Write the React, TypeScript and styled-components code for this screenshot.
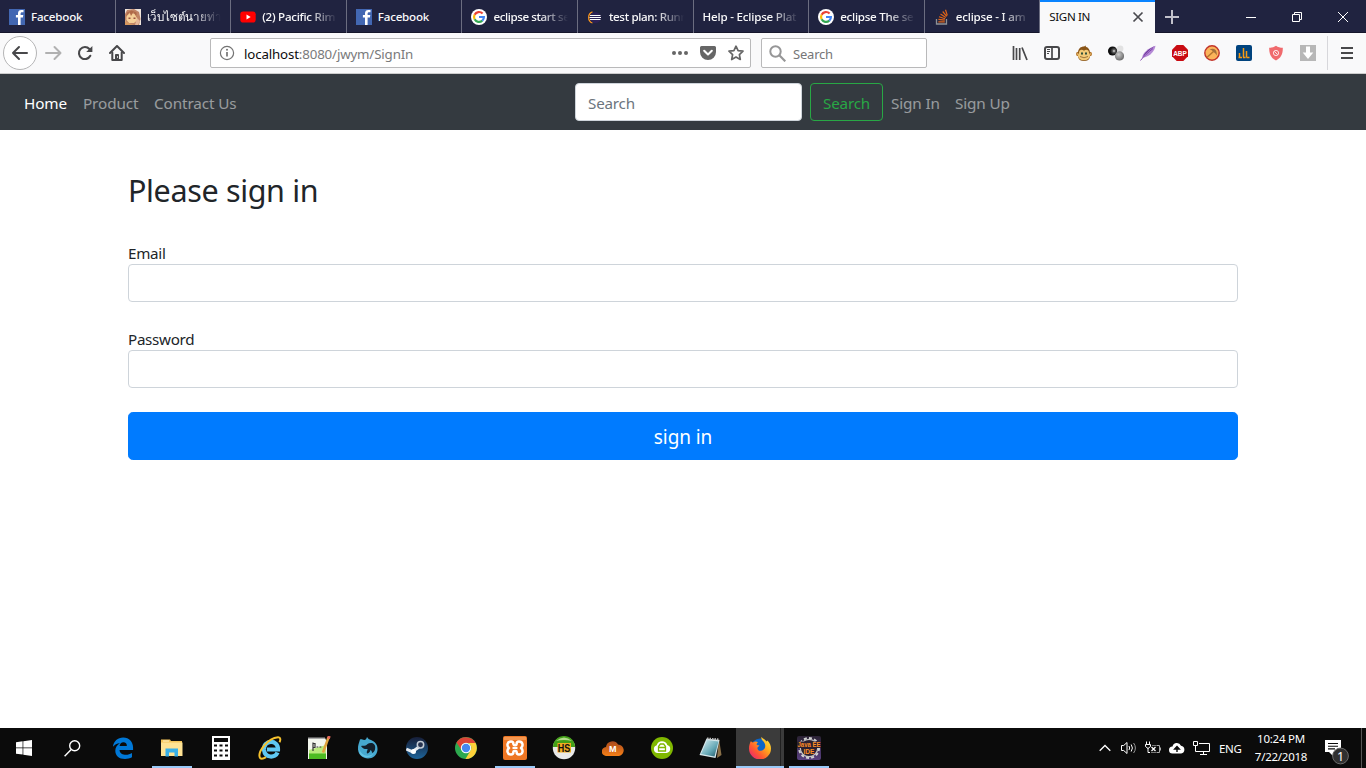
import React from "react";
import styled, { createGlobalStyle, css } from "styled-components";

const GlobalStyle = createGlobalStyle`
  *, *::before, *::after { box-sizing: border-box; }
  html, body { margin: 0; padding: 0; background: #fff; overflow: hidden; }
  body { font-family: "Segoe UI", "Noto Sans", "Open Sans", sans-serif; color: #212529; }
  button, input { font-family: inherit; }
  svg { display: block; flex: none; }
`;

const Screen = styled.div`
  width: 1366px;
  height: 768px;
  display: flex;
  flex-direction: column;
  background: #fff;
  overflow: hidden;
`;

/* ---------- Browser chrome ---------- */

const TabStrip = styled.div`
  height: 33px;
  flex: none;
  display: flex;
  background: #202340;
  box-shadow: inset 0 -1px 0 #15162b;
`;

const Tab = styled.div<{ $active?: boolean }>`
  width: 115.6px;
  height: 33px;
  flex: none;
  display: flex;
  align-items: center;
  gap: 6px;
  padding: 0 9px;
  font-size: 11.6px;
  line-height: 16px;
  font-weight: 500;
  color: #f9f9fa;
  border-right: 1px solid #6b6d80;
  ${(p) =>
    p.$active &&
    css`
      width: 114.6px;
      color: #0c0c0d;
      font-weight: 400;
      background: #f9f9fa;
      border-right: 0;
      border-top: 2px solid #0a84ff;
      padding-bottom: 2px;
      justify-content: space-between;
    `}
`;

const TabTitle = styled.span<{ $fade?: boolean; $ls: number }>`
  flex: 1;
  min-width: 0;
  overflow: hidden;
  white-space: nowrap;
  letter-spacing: ${(p) => p.$ls}px;
  ${(p) =>
    p.$fade &&
    css`
      mask-image: linear-gradient(to left, transparent 0, #000 28px);
    `}
`;

const NewTab = styled.div`
  width: 34px;
  height: 33px;
  display: flex;
  align-items: center;
  justify-content: center;
`;

const WindowControls = styled.div`
  margin-left: auto;
  display: flex;
  align-items: center;
`;

const WindowButton = styled.div`
  width: 46px;
  height: 33px;
  display: flex;
  align-items: center;
  justify-content: center;
`;

const Toolbar = styled.div`
  height: 41px;
  flex: none;
  display: flex;
  align-items: center;
  background: #f9f9fa;
  border-bottom: 1px solid #ccc;
`;

const NavButtons = styled.div`
  width: 210px;
  display: flex;
  align-items: center;
  padding-left: 3px;
`;

const BackButton = styled.div`
  width: 34px;
  height: 34px;
  border: 1px solid #b5b5b6;
  border-radius: 50%;
  background: #fff;
  display: flex;
  align-items: center;
  justify-content: center;
`;

const ToolButton = styled.div`
  width: 32px;
  height: 32px;
  flex: none;
  display: flex;
  align-items: center;
  justify-content: center;
`;

const Field = styled.div<{ $w: number }>`
  width: ${(p) => p.$w}px;
  height: 30px;
  flex: none;
  display: flex;
  align-items: center;
  background: #fff;
  border: 1px solid #b9b9ba;
  border-radius: 2px;
`;

const UrlField = styled(Field)`
  padding: 0 0 0 8px;
  margin-right: 10px;
`;

const UrlText = styled.span`
  margin-left: 9px;
  flex: 1;
  padding-top: 1px;
  font-size: 13.3px;
  line-height: 20px;
  letter-spacing: -0.15px;
  color: #7a7a7b;
  white-space: nowrap;

  b { font-weight: 400; color: #0c0c0d; }
`;

const UrlActions = styled.div`
  display: flex;
  align-items: center;
  gap: 12px;
  padding-right: 6px;
`;

const SearchField = styled(Field)`
  padding: 0 7px;
  gap: 7px;
  font-size: 13px;
  letter-spacing: -0.2px;
  color: #767677;
`;

const SearchHint = styled.span`
  padding-top: 1px;
`;

const Extensions = styled.div`
  margin-left: auto;
  display: flex;
  align-items: center;
`;

const ToolDivider = styled.div`
  width: 1px;
  height: 34px;
  margin: 0 3px;
  background: #d7d7db;
`;

const MenuButton = styled(ToolButton)`
  width: 35px;
  padding-right: 3px;
`;

/* ---------- Page ---------- */

const Navbar = styled.nav`
  height: 56px;
  flex: none;
  display: flex;
  align-items: center;
  padding: 0 16px;
  background: #343a40;
`;

const NavLink = styled.a<{ $active?: boolean; $w: number }>`
  width: ${(p) => p.$w}px;
  padding: 9px 8px 7px;
  font-size: 15.3px;
  line-height: 24px;
  letter-spacing: -0.13px;
  white-space: nowrap;
  color: ${(p) => (p.$active ? "#fff" : "rgba(255, 255, 255, 0.5)")};
`;

const NavGroup = styled.div`
  display: flex;
  width: 559px;
`;

const TextInput = styled.input`
  width: 100%;
  height: 38px;
  padding: 8px 12px 6px;
  font-size: 15.2px;
  line-height: 24px;
  letter-spacing: -0.2px;
  color: #495057;
  background: #fff;
  border: 1px solid #ced4da;
  border-radius: 4px;

  &::placeholder { color: #6c757d; opacity: 1; }
`;

const NavSearch = styled(TextInput)`
  width: 227px;
  margin-right: 8px;
`;

const OutlineButton = styled.button`
  width: 73px;
  height: 38px;
  padding: 7px 0 5px;
  font-size: 15.2px;
  line-height: 24px;
  letter-spacing: -0.2px;
  color: #28a745;
  background: transparent;
  border: 1px solid #28a745;
  border-radius: 4px;
`;

const Main = styled.main`
  flex: 1;
  width: 1110px;
  margin-left: 128px;
  padding-top: 41px;
`;

const Title = styled.h2`
  margin: 0 0 31px;
  font-size: 30.5px;
  line-height: 38px;
  font-weight: 400;
  letter-spacing: -0.35px;
`;

const FormGroup = styled.div`
  display: flex;
  flex-direction: column;
  margin-bottom: 24px;
`;

const Label = styled.label`
  padding-top: 1px;
  font-size: 15.2px;
  line-height: 24px;
  height: 24px;
  letter-spacing: -0.3px;
`;

const SubmitButton = styled.button`
  display: block;
  width: 100%;
  height: 48px;
  padding: 9px 16px 7px;
  font-size: 19px;
  line-height: 30px;
  letter-spacing: -0.1px;
  color: #fff;
  background: #007bff;
  border: 1px solid #007bff;
  border-radius: 4.8px;
`;

/* ---------- Taskbar ---------- */

const Taskbar = styled.footer`
  height: 40px;
  flex: none;
  display: flex;
  background: #0b0b0b;
  color: #fff;
`;

const TaskItem = styled.div<{ $w?: number; $open?: boolean; $focus?: boolean }>`
  width: ${(p) => p.$w ?? 49}px;
  height: 40px;
  flex: none;
  display: flex;
  align-items: center;
  justify-content: center;
  ${(p) =>
    p.$open &&
    css`
      background: linear-gradient(#99c9f8, #99c9f8) center bottom / 40px 2px no-repeat;
    `}
  ${(p) =>
    p.$focus &&
    css`
      background: linear-gradient(#99c9f8, #99c9f8) right bottom / 48px 2px no-repeat,
        linear-gradient(#202020, #202020) 45px 0 / 1px 40px no-repeat,
        linear-gradient(#3b3b3b, #3b3b3b) right top / 48px 40px no-repeat;
    `}
`;

const PinnedApps = styled.div`
  display: flex;
  margin-left: 2px;
`;

const Tray = styled.div`
  margin-left: auto;
  display: flex;
  align-items: center;
`;

const TrayIcon = styled.div`
  width: 24px;
  display: flex;
  justify-content: center;
`;

const Language = styled.span`
  width: 35px;
  padding-left: 6px;
  font-size: 11.5px;
  letter-spacing: -0.35px;
`;

const Clock = styled.div`
  width: 68px;
  margin-left: -1px;
  text-align: center;
  font-size: 11.5px;
  line-height: 18px;
  letter-spacing: -0.25px;
  white-space: nowrap;
`;

const Notifications = styled.div`
  width: 46px;
  height: 40px;
  padding: 11px 0 0 10px;
`;

const ShowDesktop = styled.div`
  width: 5px;
  height: 40px;
  border-left: 1px solid #555;
`;

/* ---------- Icons ---------- */

const FacebookIcon = () => (
  <svg width="16" height="16" viewBox="0 0 16 16">
    <rect width="16" height="16" fill="#4267b2" />
    <path d="M14.5 3.2h-1.4c-1.2 0-1.5.6-1.5 1.5V6h2.7l-.4 2.5h-2.3V16H9V8.500H6.900V6H9V4.300C9 2 10.300.9 12.400.9l2.100.1z" fill="#fff" />
  </svg>
);

const AnimeIcon = () => (
  <svg width="16" height="16" viewBox="0 0 16 16">
    <rect width="16" height="16" fill="#f1e6dc" />
    <path d="M0 5L2 1l7-1 5 3 1.500 7-1.500 6H2L0 11z" fill="#c08466" />
    <path d="M1.500 7l4-3.500L12 6v5.500L9 14H4l-2.500-3z" fill="#f5cf98" />
    <path d="M1 8l3.500-5 1.500 4 2.500-4 3.500 6-.5-5.500-5-2-4.500 2z" fill="#b06a48" />
    <path d="M3.500 8.500h2V10h-2zM8.500 8.500h2V10h-2z" fill="#9a5040" />
    <path d="M0 12l4 2 5 2H0z" fill="#d5975f" />
    <path d="M12 9l3 3-2 4h-3z" fill="#e6b89a" />
  </svg>
);

const YoutubeIcon = () => (
  <svg width="16" height="16" viewBox="0 0 16 16">
    <rect x=".3" y="2.500" width="15.400" height="11" rx="2.800" fill="#f00" />
    <path d="M6.500 5.600v4.800l4.200-2.400z" fill="#fff" />
  </svg>
);

const GoogleIcon = () => (
  <svg width="16" height="16" viewBox="0 0 16 16">
    <circle cx="8" cy="8" r="8" fill="#fff" />
    <g fill="none" strokeWidth="2.200">
      <path d="M3.600 5.700A5 5 0 0 1 11.600 4.500" stroke="#ea4335" />
      <path d="M3.600 10.300a5 5 0 0 1 0-4.600" stroke="#fbbc05" />
      <path d="M11.300 11.700a5 5 0 0 1-7.700-1.400" stroke="#34a853" />
      <path d="M8 8h4.900a5 5 0 0 1-1.600 3.700" stroke="#4285f4" />
    </g>
  </svg>
);

const EclipseIcon = () => (
  <svg width="16" height="16" viewBox="0 0 16 16">
    <path d="M5.500 2.800A6 6 0 0 0 5.500 14" fill="none" stroke="#f7941e" strokeWidth="1.300" />
    <circle cx="8.300" cy="8.500" r="5.500" fill="#2c2255" />
    <path d="M3 6.500h10.500M2.500 8.500h11.500M3 10.500h10.500" stroke="#fff" strokeWidth="1" />
  </svg>
);

const StackIcon = () => (
  <svg width="16" height="16" viewBox="0 0 16 16" fill="none">
    <path d="M2.500 10v5h10v-5" stroke="#8f9296" strokeWidth="1.300" />
    <path d="M4.300 12.800h6.500M4.400 10.400l6.400.8M5 7.800l6.100 1.900M6.500 5l5.300 3.400M8.700 2.500l4 4.900M11.500.8l1.800 5.700" stroke="#df6518" strokeWidth="1.200" />
  </svg>
);

const CloseTabIcon = () => (
  <svg width="16" height="16" viewBox="0 0 16 16">
    <path d="M3.500 3.500l9 9M12.500 3.500l-9 9" stroke="#4a4a4f" strokeWidth="1.700" />
  </svg>
);

const PlusIcon = () => (
  <svg width="16" height="16" viewBox="0 0 16 16">
    <path d="M8 1v14M1 8h14" stroke="#c1c1cb" strokeWidth="2" />
  </svg>
);

const MinimizeIcon = () => (
  <svg width="10" height="10" viewBox="0 0 10 10" shapeRendering="crispEdges">
    <path d="M0 5.500h10" stroke="#fff" />
  </svg>
);

const RestoreIcon = () => (
  <svg width="10" height="10" viewBox="0 0 10 10" fill="none" stroke="#fff">
    <path d="M.5 2.500h7v7h-7zM2.500 2.500v-2h7v7h-2" />
  </svg>
);

const CloseWindowIcon = () => (
  <svg width="10" height="10" viewBox="0 0 10 10">
    <path d="M0 0l10 10M10 0L0 10" stroke="#fff" />
  </svg>
);

const ArrowIcon = ({ right, color }: { right?: boolean; color: string }) => (
  <svg width="18" height="18" viewBox="0 0 18 18" fill="none" stroke={color} strokeWidth="2" strokeLinecap="round" strokeLinejoin="round">
    {right ? <path d="M2 9h14M10.500 3l6 6-6 6" /> : <path d="M16 9H2M8 3L2 9l6 6" />}
  </svg>
);

const ReloadIcon = () => (
  <svg width="16" height="16" viewBox="0 0 16 16">
    <path d="M13.300 10.800A6 6 0 1 1 12.400 4" fill="none" stroke="#48484a" strokeWidth="2.100" strokeLinecap="round" />
    <path d="M15.400 1v6H9.200z" fill="#48484a" />
  </svg>
);

const HomeIcon = () => (
  <svg width="16" height="16" viewBox="0 0 16 16" fill="none" stroke="#48484a" strokeWidth="2" strokeLinejoin="round" strokeLinecap="round">
    <path d="M1 8l7-7 7 7" />
    <path d="M3.300 7.500V15h9.400V7.500" />
    <path d="M6.500 14.500V9.500h3v5z" fill="#48484a" strokeWidth="1" />
    <path d="M8.500 11.500v1" stroke="#fff" strokeWidth=".8" />
  </svg>
);

const InfoIcon = () => (
  <svg width="16" height="16" viewBox="0 0 16 16">
    <circle cx="8" cy="8" r="6.600" fill="none" stroke="#737373" strokeWidth="1.200" />
    <path d="M8 7v4.500" stroke="#737373" strokeWidth="1.700" />
    <circle cx="8" cy="4.800" r="1" fill="#737373" />
  </svg>
);

const DotsIcon = () => (
  <svg width="16" height="16" viewBox="0 0 16 16" fill="#666">
    <circle cx="2" cy="8" r="2" />
    <circle cx="8" cy="8" r="2" />
    <circle cx="14" cy="8" r="2" />
  </svg>
);

const PocketIcon = () => (
  <svg width="16" height="16" viewBox="0 0 16 16">
    <path d="M1.500 1h13A1.500 1.500 0 0 1 16 2.500V7A8 8 0 0 1 0 7V2.500A1.500 1.500 0 0 1 1.500 1z" fill="#666" />
    <path d="M4.200 5.800L8 9.400l3.800-3.600" fill="none" stroke="#fff" strokeWidth="2.100" strokeLinecap="round" strokeLinejoin="round" />
  </svg>
);

const StarIcon = () => (
  <svg width="16" height="16" viewBox="0 0 16 16">
    <path d="M8 1.200l2.100 4.400 4.900.6-3.600 3.400.9 4.900L8 12.100l-4.300 2.400.9-4.900L1 6.200l4.900-.6z" fill="none" stroke="#666" strokeWidth="1.700" strokeLinejoin="round" />
  </svg>
);

const MagnifierIcon = () => (
  <svg width="17" height="17" viewBox="0 0 17 17" fill="none" stroke="#969697" strokeWidth="2">
    <circle cx="6.500" cy="6.500" r="5.200" />
    <path d="M10.300 10.300l6 6" strokeWidth="2.200" />
  </svg>
);

const LibraryIcon = () => (
  <svg width="16" height="16" viewBox="0 0 16 16" fill="none" stroke="#48484a" strokeWidth="1.700">
    <path d="M1.500 1v14M4.500 3v12M7.700 3v12M10 2.500L15 15" />
  </svg>
);

const SidebarIcon = () => (
  <svg width="16" height="16" viewBox="0 0 16 16" fill="none" stroke="#48484a">
    <rect x="1" y="2" width="14" height="12" rx="2" strokeWidth="2" />
    <path d="M8 2v12" strokeWidth="1.700" />
    <path d="M3 4.500h3M3 6.500h3M3 8.500h2" />
  </svg>
);

const MonkeyIcon = () => (
  <svg width="16" height="16" viewBox="0 0 16 16">
    <circle cx="2.200" cy="9" r="2.200" fill="#b5762a" />
    <circle cx="13.800" cy="9" r="2.200" fill="#b5762a" />
    <circle cx="2.300" cy="9" r="1.100" fill="#f2c979" />
    <circle cx="13.700" cy="9" r="1.100" fill="#f2c979" />
    <path d="M2 8C2 3.500 5 1.500 8 1.500L10 .5l-.3 1.300C12.500 2.500 14 5 14 8v4c-1 3-3 4-6 4s-5-1-6-4z" fill="#8a5518" />
    <path d="M3 8c0-3.500 3-4 5-2.300C10 4 13 4.500 13 8c2 1.500 1.500 7-5 7.200C1.500 15 1 9.500 3 8z" fill="#f3ca78" />
    <ellipse cx="6" cy="8.500" rx="1" ry="1.300" fill="#274a38" />
    <ellipse cx="10" cy="8.500" rx="1" ry="1.300" fill="#274a38" />
    <path d="M4 11.500q4 2.500 8 0" fill="none" stroke="#8a5f2b" strokeWidth=".8" />
  </svg>
);

const SpheresIcon = () => (
  <svg width="16" height="16" viewBox="0 0 16 16">
    <defs>
      <radialGradient id="blackBall" cx=".65" cy=".5" r=".6"><stop stopColor="#eee" /><stop offset=".3" stopColor="#555" /><stop offset=".65" stopColor="#151515" /><stop offset="1" stopColor="#050505" /></radialGradient>
      <radialGradient id="greyBall" cx=".4" cy=".35" r=".7"><stop stopColor="#ccc" /><stop offset="1" stopColor="#666" /></radialGradient>
    </defs>
    <circle cx="12.200" cy="3.700" r="3.200" fill="#e2e2e2" />
    <circle cx="4.600" cy="6" r="4.600" fill="url(#blackBall)" />
    <circle cx="11.500" cy="10.900" r="4.600" fill="url(#greyBall)" />
  </svg>
);

const FeatherIcon = () => (
  <svg width="16" height="16" viewBox="0 0 16 16">
    <path d="M2 13C2.500 8 8 3 15.500.7 15 5 11 9.500 8 11c-2 1-4 1.500-6 2z" fill="#b58ad6" />
    <path d="M3 12C6 8 10 4 15 1 11 3 5 6 3 12z" fill="#6b3597" />
    <path d="M.5 15.500C4 11 8 7.500 13 3.500" fill="none" stroke="#7a3da8" strokeWidth=".9" />
  </svg>
);

const AdblockIcon = () => (
  <svg width="16" height="16" viewBox="0 0 16 16">
    <path d="M4.700 0h6.600L16 4.700v6.600L11.300 16H4.700L0 11.300V4.700z" fill="#c90b12" />
    <text x="8" y="10.800" textAnchor="middle" textLength="13.600" lengthAdjust="spacingAndGlyphs" fontFamily="Liberation Sans, sans-serif" fontWeight="700" fontSize="8" fill="#fff">ABP</text>
  </svg>
);

const PickaxeIcon = () => (
  <svg width="16" height="16" viewBox="0 0 16 16">
    <circle cx="8" cy="8" r="7.200" fill="#fbb45a" stroke="#c2342a" strokeWidth="1.400" />
    <path d="M2.800 12.500L9.500 6.500" stroke="#b5752f" strokeWidth="1.500" />
    <path d="M5.500 4.200q4-1 5.500.300 2 1.500 1.800 6-1.500-3-3.300-3.600Q8 5 5.500 4.200z" fill="#a3703c" />
  </svg>
);

const ChartIcon = () => (
  <svg width="16" height="16" viewBox="0 0 16 16">
    <rect width="16" height="16" rx="2" fill="#00437e" />
    <path d="M2.500 12.500h3.500M7 12.500h2.500M10.500 12.500h3M3.500 12.500V8M7.500 12.500V3M10.500 12.500V6" fill="none" stroke="#f79a12" strokeWidth="1.500" />
  </svg>
);

const ShieldIcon = () => (
  <svg width="16" height="16" viewBox="0 0 16 16">
    <path d="M8 .8c2 1.400 4.200 2 6.800 2C15 9.500 12.500 13.300 8 15.500 3.500 13.300 1 9.500 1.200 2.800 3.800 2.800 6 2.200 8 .8z" fill="#f06a6d" />
    <circle cx="8" cy="8" r="2.600" fill="none" stroke="#fde3e3" />
    <path d="M6.200 6.200l3.600 3.600" stroke="#fde3e3" />
  </svg>
);

const DownloadIcon = () => (
  <svg width="16" height="16" viewBox="0 0 16 16">
    <rect width="16" height="16" fill="#b7b7b7" />
    <path d="M6 1.500h4v6h3.300L8 14 2.700 7.500H6z" fill="#fff" />
  </svg>
);

const MenuIcon = () => (
  <svg width="14" height="14" viewBox="0 0 14 14">
    <path d="M1 2h12M1 7h12M1 12h12" stroke="#48484a" strokeWidth="2" />
  </svg>
);

const WindowsIcon = () => (
  <svg width="16" height="16" viewBox="0 0 16 16" fill="#fff">
    <path d="M0 2.200L6.600 1.300v6.200H0zM7.300 1.200L16 0v7.500H7.300zM0 8.300h6.600v6.300L0 13.700zM7.300 8.300H16V16l-8.700-1.200z" />
  </svg>
);

const TaskSearchIcon = () => (
  <svg width="17" height="17" viewBox="0 0 17 17" fill="none" stroke="#fff" strokeWidth="1.400">
    <circle cx="10.700" cy="5.700" r="5" />
    <path d="M7.200 9.400L.6 16.200" />
  </svg>
);

const EdgeIcon = () => (
  <svg width="22" height="22" viewBox="0 0 24 24">
    <path d="M1 10.700C1.700 4.500 6.300.5 12.200.5 19 .5 23 5.600 23 11.500v2.600H8.200c.3 3.700 3.500 5.300 7 5.300 2.400 0 4.500-.6 6.600-1.900v4.700c-2.300 1.200-4.800 1.800-7.600 1.800C7.500 24 3.600 20.300 3.600 15c0-3.600 1.800-6.500 5-8.300C5.400 6.900 2.700 8.300 1 10.700zM8.300 9.800h7.900c0-2.600-1.200-4-3.700-4-2.400 0-3.900 1.500-4.200 4z" fill="#0078d7" />
  </svg>
);

const FolderIcon = () => (
  <svg width="22" height="20" viewBox="0 0 22 20">
    <path d="M0 1.500h9l1 1.500h11v15H0z" fill="#f6c65b" />
    <path d="M2 3h6" stroke="#fff3c9" />
    <path d="M0 4.500h21.500V18H0z" fill="#ffe394" />
    <path d="M4.500 18.500v-8h12.500v8h-3.500v-4H8v4z" fill="#39b0e8" />
  </svg>
);

const CalculatorIcon = () => (
  <svg width="18" height="24" viewBox="0 0 18 24">
    <rect width="18" height="24" fill="#fff" />
    <path d="M2 2h14v4H2z" fill="#0b0b0b" />
    <path d="M2 9.500h3M7.500 9.500h3M13 9.500h3M2 14.500h3M7.500 14.500h3M13 14.500h3M2 19.500h3M7.500 19.500h3M13 19.500h3" stroke="#0b0b0b" strokeWidth="2" />
  </svg>
);

const ExplorerIcon = () => (
  <svg width="24" height="24" viewBox="0 0 24 24" fill="none">
    <path d="M19.500 16.500C17.500 22 7 22.500 6 14 5 3.500 20.500 3 20 13.500H9" stroke="#5fc8f3" strokeWidth="4.200" />
    <path d="M2 22C-1 16 10 2 20 1.300c3-.2 2.500 3 1.500 5M2 22c1.500 1.500 4 .5 6-.8" stroke="#f6c22d" strokeWidth="2" />
  </svg>
);

const NotepadPlusIcon = () => (
  <svg width="24" height="24" viewBox="0 0 24 24">
    <path d="M1 2h17l2 4v17H1z" fill="#f3f6ee" />
    <path d="M2 14l17-5v14H2z" fill="#b9ea7c" />
    <path d="M2 17.500h17V23H2z" fill="#4dbb22" />
    <path d="M1 1.500h17v1.500H1z" fill="#a9a9a9" />
    <path d="M6 6.500V15M6 7.500h2v4H6M9.500 11h1.800M12.500 11h1.800" stroke="#333" fill="none" strokeWidth="1.200" />
    <path d="M21.500 1.500l-5.500 15" stroke="#e0a33d" strokeWidth="2.500" />
    <path d="M22.300 0l-1 2.600" stroke="#e46a5e" strokeWidth="3" />
  </svg>
);

const WaterfoxIcon = () => (
  <svg width="22" height="22" viewBox="0 0 22 22">
    <path d="M3 2.500C5 2 5 3 7.500 3c1 0 2-1 2.500-3 1 1.500 2 2.500 4 3 4 1.500 7 5 6.500 10C20 18 16 21.500 11 21.500S1.500 18 1 12.500C.8 8 2 6 3 2.500z" fill="#46a9d0" />
    <path d="M4 9c1.500-.5 3 0 4.500-.5C10 8 11 5.500 15 6c2 .5 4 2.500 3 6.500-.500 2-1.500 3-3 3.500 0-1.500-.5-2.500-1.500-3-.5 2-2 3.500-3.500 3.500-1-2 1-3.500.5-4.500-2 0-4.500.5-6.500-3z" fill="#12202c" />
    <path d="M2.500 12c1 6 8 9 14 4.500-3 5-11 5.500-14-.5z" fill="#64c4e4" />
  </svg>
);

const SteamIcon = () => (
  <svg width="22" height="22" viewBox="0 0 22 22">
    <defs><linearGradient id="steamFill" x2="0" y2="1"><stop stopColor="#171e38" /><stop offset="1" stopColor="#1d6398" /></linearGradient></defs>
    <circle cx="11" cy="11" r="11" fill="url(#steamFill)" />
    <path d="M.3 12l6 2.700L13 10" fill="none" stroke="#e5ebf0" strokeWidth="3" />
    <circle cx="14.500" cy="7.800" r="3.200" fill="#26334f" stroke="#c3ccd6" strokeWidth="1.500" />
    <circle cx="7.500" cy="14.500" r="2.500" fill="#fff" />
  </svg>
);

const ChromeIcon = () => (
  <svg width="22" height="22" viewBox="0 0 22 22">
    <circle cx="11" cy="11" r="11" fill="#2da94f" />
    <path d="M1.500 5.500A11 11 0 0 1 20.600 6H11a5 5 0 0 0-4.700 6.700z" fill="#dc4437" />
    <path d="M20.600 6A11 11 0 0 1 10.500 22l5-8.500A5 5 0 0 0 13 6z" fill="#fdd039" />
    <circle cx="11" cy="11" r="5.200" fill="#fff" />
    <circle cx="11" cy="11" r="4.200" fill="#4688f1" />
  </svg>
);

const XamppIcon = () => (
  <svg width="24" height="24" viewBox="0 0 24 24">
    <rect width="24" height="24" rx="2" fill="#ee7623" />
    <path d="M1 1h22v3H1z" fill="#f59750" />
    <path d="M8 5.500C4 5.500 3.500 10 6 12c-2.500 2-2 6.500 2 6.500 1.800 0 2.400-1.200 2.400-2.500 0-1.500 3.200-1.500 3.200 0 0 1.300.6 2.500 2.400 2.500 4 0 4.500-4.500 2-6.500 2.500-2 2-6.500-2-6.500-1.800 0-2.400 1.200-2.400 2.500 0 1.500-3.200 1.500-3.200 0C10.400 6.700 9.800 5.500 8 5.500z" fill="none" stroke="#fff" strokeWidth="2.500" strokeLinejoin="round" />
    <path d="M9.500 12h5" stroke="#fff" strokeWidth="2.200" />
  </svg>
);

const HeidiIcon = () => (
  <svg width="24" height="24" viewBox="0 0 24 24">
    <circle cx="12" cy="12" r="11.200" fill="#e9e9e9" />
    <path d="M1 11a11 11 0 0 1 22 0z" fill="#43a018" />
    <path d="M4 5q8-7 16 0-8-2-16 0z" fill="#b2dc8b" />
    <path d="M5.500 7h13.500v9.500H5.500z" fill="#f1ac20" />
    <text x="12" y="15.500" textAnchor="middle" textLength="12.500" lengthAdjust="spacingAndGlyphs" fontFamily="Liberation Sans, sans-serif" fontWeight="700" fontSize="10" fill="#111">HS</text>
  </svg>
);

const CloudMIcon = () => (
  <svg width="22" height="16" viewBox="0 0 22 16">
    <defs><linearGradient id="mCloud" x2="0" y2="1"><stop stopColor="#a94a1d" /><stop offset="1" stopColor="#f57f17" /></linearGradient></defs>
    <path d="M4.500 16A4.500 4.500 0 0 1 4 7a6.500 6.500 0 0 1 12-2.500A5.800 5.800 0 0 1 17 16z" fill="url(#mCloud)" />
    <text x="10.700" y="12.300" textAnchor="middle" fontFamily="Liberation Sans, sans-serif" fontWeight="700" fontSize="9" fill="#fff">M</text>
  </svg>
);

const GreenCloudIcon = () => (
  <svg width="22" height="22" viewBox="0 0 22 22">
    <circle cx="11" cy="11" r="11" fill="#80b800" />
    <path d="M6.500 16a4 4 0 0 1-.8-7.800A5.600 5.600 0 0 1 16.300 8a4.100 4.100 0 0 1-.8 8z" fill="#fff" />
    <path d="M7.500 14V9.500L9.300 7h3.400l1.800 2.500V14zM8 10.500h6" fill="none" stroke="#80b800" strokeWidth="1.300" />
  </svg>
);

const NotepadIcon = () => (
  <svg width="24" height="24" viewBox="0 0 24 24">
    <defs><linearGradient id="padFill" x1="0" y1="0" x2="1" y2="1"><stop stopColor="#d9f0f3" /><stop offset=".6" stopColor="#65a8b6" /><stop offset="1" stopColor="#1d5364" /></linearGradient></defs>
    <path d="M20 3l2.500 16-4.500 3z" fill="#8a7048" />
    <path d="M7.500 2.500l13 1.500-4 18L.5 19z" fill="#d9e9ed" />
    <path d="M8 4l11.500 1.500-4 15-13.500-2.500z" fill="url(#padFill)" />
    <path d="M8 2.500l12.500 1" stroke="#bbb" strokeWidth="2" strokeDasharray="1.500 1" />
  </svg>
);

const FirefoxIcon = () => (
  <svg width="22" height="22" viewBox="0 0 22 22">
    <defs>
      <linearGradient id="foxFill" x1="1" y1="0" x2="0" y2="1"><stop stopColor="#fff44f" /><stop offset=".35" stopColor="#ffad1c" /><stop offset=".65" stopColor="#ff5a2f" /><stop offset="1" stopColor="#e31587" /></linearGradient>
    </defs>
    <circle cx="11" cy="10.500" r="9" fill="#0b65c9" />
    <path d="M2 4c.5 1 1 1.400 2 1.500C6 4 8 4.500 9 5.500 8 6 7.500 7 7.800 8l2.700.5-2 2C8 13 10 14.500 13 13.500c4-1.500 4.500-6.500.5-10C12.500 2.500 12 1 12.500 0c1.500 2 3.500 2.500 5 4.500l1-1C21 6 22 9 22 11.500A11 11 0 0 1 0 11.500C0 8.500.8 6 2 4z" fill="url(#foxFill)" />
  </svg>
);

const JavaIdeIcon = () => (
  <svg width="24" height="24" viewBox="0 0 24 24">
    <defs><linearGradient id="javaFill" x2="0" y2="1"><stop stopColor="#2a2233" /><stop offset="1" stopColor="#594080" /></linearGradient></defs>
    <rect width="24" height="24" rx="2" fill="url(#javaFill)" />
    <circle cx="12" cy="12" r="10" fill="none" stroke="#d2d2d2" strokeWidth="2" strokeDasharray="3 2.200" />
    <circle cx="12" cy="12" r="8.700" fill="#2b2030" stroke="#c6c6c6" strokeWidth="1.200" />
    <path d="M0 5.500h24v6.500H0z" fill="#2b2030" />
    <g fontFamily="Liberation Sans, sans-serif" fontWeight="700" fill="#ff8f26" textAnchor="middle">
      <text x="12" y="11" fontSize="7.500" textLength="23" lengthAdjust="spacingAndGlyphs">Java EE</text>
      <text x="12" y="18" fontSize="7.500" textLength="11" lengthAdjust="spacingAndGlyphs">IDE</text>
    </g>
  </svg>
);

const ChevronUpIcon = () => (
  <svg width="12" height="8" viewBox="0 0 12 8"><path d="M.7 6.800L6 1.500l5.300 5.300" fill="none" stroke="#fff" strokeWidth="1.300" /></svg>
);

const SpeakerIcon = () => (
  <svg width="16" height="16" viewBox="0 0 16 16" fill="none" stroke="#fff">
    <path d="M.5 5.500h2.200L6 2.500v11l-3.300-3H.5z" />
    <path d="M8 6q1.300 2 0 4M10.200 4.500q2.400 3.500 0 7" />
    <path d="M12.600 3q3.600 5 0 10" stroke="#999" />
  </svg>
);

const BatteryIcon = () => (
  <svg width="16" height="16" viewBox="0 0 16 16" fill="none" stroke="#fff">
    <path d="M1.500 1.500v3M4.500 1.500v3M.5 4.500h5v2L3 8.500.5 6.500zM3 8v4.500h2" />
    <path d="M11.500 12.500h3v-7h-3M15.500 7.500v3" stroke="#aaa" />
    <path d="M6.500 7l4 4M10.500 7l-4 4" strokeWidth="1.300" />
    <path d="M7 5.500h4M6 12.500h5" stroke="#777" />
  </svg>
);

const CloudUpIcon = () => (
  <svg width="16" height="12" viewBox="0 0 16 12">
    <path d="M3.500 11.500a3.500 3.500 0 0 1 0-7A4.500 4.500 0 0 1 12 3.800a3.900 3.900 0 0 1 .2 7.700z" fill="#fff" />
    <path d="M8 10V6M5.700 7L8 4.500 10.300 7z" stroke="#0b0b0b" strokeWidth="1.400" fill="#0b0b0b" />
  </svg>
);

const NetworkIcon = () => (
  <svg width="17" height="16" viewBox="0 0 17 16" fill="none" stroke="#fff">
    <path d="M6 3.500h10.500v8H5M10.500 11.500v3M7 14.500h7" />
    <path d="M.5 1.500h4v4h-4zM2.500 5.500v6H5" />
  </svg>
);

const NotificationIcon = () => (
  <svg width="25" height="26" viewBox="0 0 25 26">
    <path d="M0 1h16v12H8v4l-4-4H0z" fill="#fff" />
    <path d="M3 4.500h10M3 7.200h10M3 9.900h7" stroke="#0b0b0b" strokeWidth="1.100" />
    <circle cx="15.500" cy="17" r="7.900" fill="#303030" stroke="#6a6a6a" />
    <text x="15.500" y="21.500" textAnchor="middle" fontFamily="Noto Sans, sans-serif" fontSize="12.500" fill="#fff">1</text>
  </svg>
);

/* ---------- Data ---------- */

const tabs = [
  { title: "Facebook", icon: <FacebookIcon />, ls: -0.2 },
  { title: "เว็บไซต์นายท่า", icon: <AnimeIcon />, fade: true, ls: -0.2 },
  { title: "(2) Pacific Rim", icon: <YoutubeIcon />, fade: true, ls: -0.25 },
  { title: "Facebook", icon: <FacebookIcon />, ls: -0.2 },
  { title: "eclipse start se", icon: <GoogleIcon />, fade: true, ls: -0.4 },
  { title: "test plan: Runn", icon: <EclipseIcon />, fade: true, ls: -0.35 },
  { title: "Help - Eclipse Plat", icon: null, fade: true, ls: -0.2 },
  { title: "eclipse The se", icon: <GoogleIcon />, fade: true, ls: -0.25 },
  { title: "eclipse - I am", icon: <StackIcon />, fade: true, ls: -0.2 },
];

const extensions = [
  LibraryIcon, SidebarIcon, MonkeyIcon, SpheresIcon, FeatherIcon,
  AdblockIcon, PickaxeIcon, ChartIcon, ShieldIcon, DownloadIcon,
];

const apps = [
  { Icon: EdgeIcon },
  { Icon: FolderIcon, open: true },
  { Icon: CalculatorIcon },
  { Icon: ExplorerIcon },
  { Icon: NotepadPlusIcon },
  { Icon: WaterfoxIcon },
  { Icon: SteamIcon },
  { Icon: ChromeIcon },
  { Icon: XamppIcon, open: true },
  { Icon: HeidiIcon },
  { Icon: CloudMIcon },
  { Icon: GreenCloudIcon },
  { Icon: NotepadIcon },
  { Icon: FirefoxIcon, focus: true },
  { Icon: JavaIdeIcon, open: true },
];

export default function App() {
  return (
    <Screen>
      <GlobalStyle />
      <TabStrip>
        {tabs.map((tab, i) => (
          <Tab key={i}>
            {tab.icon}
            <TabTitle $fade={tab.fade} $ls={tab.ls}>{tab.title}</TabTitle>
          </Tab>
        ))}
        <Tab $active>
          <TabTitle $ls={-0.4}>SIGN IN</TabTitle>
          <CloseTabIcon />
        </Tab>
        <NewTab><PlusIcon /></NewTab>
        <WindowControls>
          <WindowButton><MinimizeIcon /></WindowButton>
          <WindowButton><RestoreIcon /></WindowButton>
          <WindowButton><CloseWindowIcon /></WindowButton>
        </WindowControls>
      </TabStrip>

      <Toolbar>
        <NavButtons>
          <BackButton><ArrowIcon color="#48484a" /></BackButton>
          <ToolButton><ArrowIcon right color="#b1b1b1" /></ToolButton>
          <ToolButton><ReloadIcon /></ToolButton>
          <ToolButton><HomeIcon /></ToolButton>
        </NavButtons>
        <UrlField $w={541}>
          <InfoIcon />
          <UrlText><b>localhost</b>:8080/jwym/SignIn</UrlText>
          <UrlActions><DotsIcon /><PocketIcon /><StarIcon /></UrlActions>
        </UrlField>
        <SearchField $w={166}><MagnifierIcon /><SearchHint>Search</SearchHint></SearchField>
        <Extensions>
          {extensions.map((Icon, i) => (
            <ToolButton key={i}><Icon /></ToolButton>
          ))}
          <ToolDivider />
          <MenuButton><MenuIcon /></MenuButton>
        </Extensions>
      </Toolbar>

      <Navbar>
        <NavGroup>
          <NavLink $active $w={59}>Home</NavLink>
          <NavLink $w={71}>Product</NavLink>
          <NavLink $w={99}>Contract Us</NavLink>
        </NavGroup>
        <NavSearch placeholder="Search" />
        <OutlineButton>Search</OutlineButton>
        <NavLink $w={64}>Sign In</NavLink>
        <NavLink $w={72}>Sign Up</NavLink>
      </Navbar>

      <Main>
        <Title>Please sign in</Title>
        <FormGroup>
          <Label>Email</Label>
          <TextInput type="email" />
        </FormGroup>
        <FormGroup>
          <Label>Password</Label>
          <TextInput type="password" />
        </FormGroup>
        <SubmitButton>sign in</SubmitButton>
      </Main>

      <Taskbar>
        <TaskItem $w={48}><WindowsIcon /></TaskItem>
        <TaskItem $w={48}><TaskSearchIcon /></TaskItem>
        <PinnedApps>
          {apps.map(({ Icon, open, focus }, i) => (
            <TaskItem key={i} $open={open} $focus={focus}><Icon /></TaskItem>
          ))}
        </PinnedApps>
        <Tray>
          <TrayIcon><ChevronUpIcon /></TrayIcon>
          <TrayIcon><SpeakerIcon /></TrayIcon>
          <TrayIcon><BatteryIcon /></TrayIcon>
          <TrayIcon><CloudUpIcon /></TrayIcon>
          <TrayIcon><NetworkIcon /></TrayIcon>
          <Language>ENG</Language>
          <Clock>10:24 PM<br />7/22/2018</Clock>
          <Notifications><NotificationIcon /></Notifications>
          <ShowDesktop />
        </Tray>
      </Taskbar>
    </Screen>
  );
}
